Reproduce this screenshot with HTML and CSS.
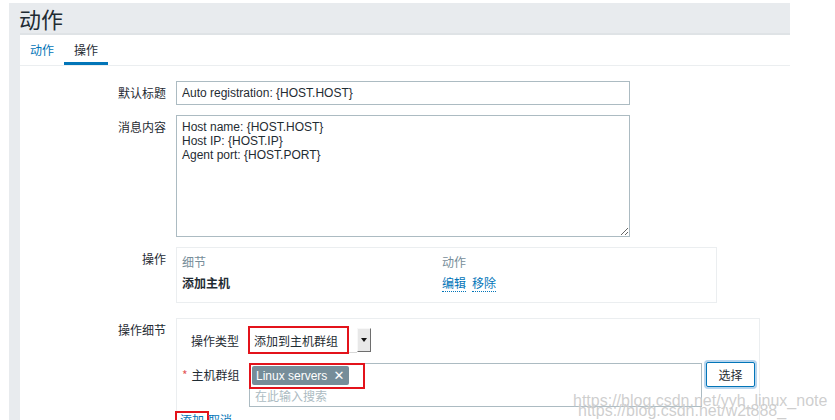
FILE: index.html
```html
<!DOCTYPE html>
<html lang="zh">
<head>
<meta charset="utf-8">
<title>动作</title>
<link rel="stylesheet" href="styles.css">
</head>
<body>
<div class="page">
  <header class="page-head"><h1 class="title">动作</h1></header>
  <div class="panel">
    <ul class="tabs">
      <li class="tab">动作</li>
      <li class="tab active">操作</li>
    </ul>
    <div class="form">
      <div class="lbl">默认标题</div>
      <div class="field"><input class="input" type="text" value="Auto registration: {HOST.HOST}"></div>

      <div class="lbl">消息内容</div>
      <div class="field"><textarea class="textarea">Host name: {HOST.HOST}
Host IP: {HOST.IP}
Agent port: {HOST.PORT}</textarea></div>

      <div class="lbl">操作</div>
      <div class="field">
        <div class="ops">
          <div class="ops-head">细节</div>
          <div class="ops-head">动作</div>
          <div class="ops-name">添加主机</div>
          <div class="ops-actions"><span class="link">编辑</span><span class="link">移除</span></div>
        </div>
      </div>

      <div class="lbl lbl-detail">操作细节</div>
      <div class="field field-detail">
        <div class="detail">
          <div class="detail-grid">
            <div class="dlbl">操作类型</div>
            <div class="dfield">
              <div class="select">
                <span class="select-text">添加到主机群组</span>
                <span class="select-btn"><span class="arrow"></span></span>
                <span class="mark mark-select"></span>
              </div>
            </div>

            <div class="dlbl dlbl-ms"><span class="req">*</span>主机群组</div>
            <div class="dfield ms-row">
              <div class="multiselect">
                <div class="tags">
                  <span class="tag">Linux servers <span class="tag-x">✕</span></span>
                </div>
                <div class="placeholder">在此输入搜索</div>
                <span class="mark mark-tag"></span>
              </div>
              <button class="btn-choose" type="button">选择</button>
            </div>
          </div>
          <div class="detail-links">
            <span class="blink add">添加<span class="mark mark-add"></span></span>
            <span class="blink">取消</span>
          </div>
        </div>
      </div>
    </div>
  </div>
</div>
<div class="watermark">
  <div class="wm wm1">https://blog.csdn.net/yyh_linux_note</div>
  <div class="wm wm2">https://blog.csdn.net/w2t888_</div>
</div>
</body>
</html>
```

FILE: styles.css
```css
html, body {
  margin: 0;
  padding: 0;
  background: #ffffff;
  height: 420px;
  overflow: hidden;
}
body {
  position: relative;
  font-family: "Liberation Sans", Arial, "Noto Sans CJK SC", sans-serif;
  font-size: 12px;
  line-height: 14px;
  color: #1f2c33;
}
.page {
  margin: 3px 0 0 9px;
  width: 781px;
  background: #e8ebee;
  padding-left: 11px;
  box-sizing: border-box;
  min-height: 420px;
}
.page-head {
  height: 30px;
}
.title {
  margin: 0 0 0 -1px;
  font-size: 22px;
  line-height: 30px;
  font-weight: normal;
  color: #1f2c33;
  font-family: "Noto Sans CJK SC", sans-serif;
}
.panel {
  background: #ffffff;
  border-top: 2px solid #dfe3e6;
  min-height: 400px;
}
.tabs {
  list-style: none;
  margin: 0;
  padding: 0;
  display: flex;
  height: 30px;
  border-bottom: 1px solid #ebeef0;
}
.tab {
  padding: 0 10px;
  line-height: 30px;
  font-family: "Noto Sans CJK SC", sans-serif;
  font-size: 12px;
  color: #0275b8;
  box-sizing: border-box;
  height: 30px;
}
.tab.active {
  color: #1f2c33;
  border-bottom: 3px solid #0275b8;
}
.form {
  display: grid;
  grid-template-columns: 146px 1fr;
  column-gap: 10px;
  row-gap: 10px;
  padding-top: 15px;
}
.lbl {
  text-align: right;
  padding-top: 5px;
  font-family: "Noto Sans CJK SC", sans-serif;
  color: #1f2c33;
  line-height: 14px;
}
.lbl-detail, .field-detail {
  margin-top: 5px;
}
.field {
  display: flex;
  align-items: flex-start;
}
.input {
  width: 454px;
  height: 24px;
  box-sizing: border-box;
  border: 1px solid #acbbc2;
  padding: 0 5px;
  margin: 0;
  font-family: "Liberation Sans", Arial, sans-serif;
  font-size: 12px;
  color: #1f2c33;
  background: #fff;
  outline: none;
}
.textarea {
  width: 454px;
  height: 122px;
  box-sizing: border-box;
  border: 1px solid #acbbc2;
  padding: 4px 5px;
  margin: 0;
  font-family: "Liberation Sans", Arial, sans-serif;
  font-size: 12px;
  line-height: 14px;
  color: #1f2c33;
  background: #fff;
  resize: both;
  outline: none;
  overflow: hidden;
}
.ops {
  width: 541px;
  height: 56px;
  box-sizing: border-box;
  border: 1px solid #ebeef0;
  display: grid;
  grid-template-columns: 260px 1fr;
  grid-auto-rows: 14px;
  align-content: start;
  row-gap: 7px;
  padding: 7px 5px 0 5px;
  font-family: "Noto Sans CJK SC", sans-serif;
}
.ops-head {
  color: #768d99;
  line-height: 14px;
}
.ops-name {
  font-weight: bold;
  color: #1f2c33;
  line-height: 14px;
}
.ops-actions {
  display: flex;
  gap: 6px;
  line-height: 14px;
}
.link {
  color: #0275b8;
  border-bottom: 1px dotted #0275b8;
  line-height: 14px;
  height: 15px;
}
.detail {
  width: 584px;
  box-sizing: border-box;
  border: 1px solid #ebeef0;
  border-bottom: none;
  padding: 9px 5px 0 5px;
  min-height: 110px;
}
.detail-grid {
  display: grid;
  grid-template-columns: 57px 1fr;
  column-gap: 10px;
  row-gap: 10px;
}
.dlbl {
  text-align: right;
  padding-top: 6px;
  font-family: "Noto Sans CJK SC", sans-serif;
  line-height: 14px;
  white-space: nowrap;
}
.dlbl-ms {
  padding-top: 5px;
}
.req {
  color: #e45959;
  margin-right: 4px;
}
.dfield {
  display: flex;
  align-items: flex-start;
}
.select {
  position: relative;
  display: flex;
  width: 122px;
  height: 25px;
  box-sizing: border-box;
  background: #fff;
}
.select-text {
  flex: 1;
  padding-left: 5px;
  line-height: 25px;
  font-family: "Noto Sans CJK SC", sans-serif;
  color: #1f2c33;
  border-bottom: 1px solid #d8d8d8;
  box-sizing: border-box;
}
.select-btn {
  width: 14px;
  height: 24px;
  box-sizing: border-box;
  background: #e8e8e8;
  border-top: 1px solid #f8f8f8;
  border-left: 1px solid #f8f8f8;
  border-right: 1px solid #6e6e6e;
  border-bottom: 1px solid #6e6e6e;
  display: flex;
  align-items: center;
  justify-content: center;
}
.arrow {
  width: 0;
  height: 0;
  border-left: 3px solid transparent;
  border-right: 3px solid transparent;
  border-top: 4px solid #111;
}
.mark {
  position: absolute;
  border: 2px solid #e3131b;
  box-sizing: border-box;
  pointer-events: none;
}
.mark-select {
  left: -1px;
  top: -2px;
  width: 101px;
  height: 28px;
}
.ms-row {
  gap: 4px;
}
.multiselect {
  position: relative;
  width: 453px;
  height: 44px;
  box-sizing: border-box;
  border: 1px solid #acbbc2;
  padding: 2px 2px 0 2px;
}
.tags {
  display: flex;
  height: 19px;
}
.tag {
  display: inline-flex;
  align-items: center;
  height: 19px;
  padding: 0 5px 0 4px;
  background: #768d99;
  color: #fff;
  border-radius: 2px;
  font-family: "Liberation Sans", Arial, sans-serif;
  font-size: 12px;
  width: 97px;
  box-sizing: border-box;
  white-space: nowrap;
}
.tag-x {
  font-weight: bold;
  font-size: 13px;
  margin-left: 6px;
  font-family: "DejaVu Sans", sans-serif;
}
.placeholder {
  padding: 4px 0 0 3px;
  color: #acbbc2;
  font-family: "Noto Sans CJK SC", sans-serif;
  line-height: 14px;
}
.mark-tag {
  left: -1px;
  top: -1px;
  width: 116px;
  height: 26px;
}
.btn-choose {
  width: 49px;
  height: 25px;
  margin: -1px 0 0 0;
  box-sizing: border-box;
  border: 1px solid #0275b8;
  border-radius: 2px;
  background: #fff;
  color: #1f2c33;
  font-family: "Noto Sans CJK SC", sans-serif;
  font-size: 12px;
  padding: 0;
  box-shadow: 0 0 0 2px #b7d5ee;
}
.detail-links {
  margin: 6px 0 0 -2px;
  display: flex;
  gap: 4px;
  font-family: "Noto Sans CJK SC", sans-serif;
}
.blink {
  color: #0275b8;
  position: relative;
}
.mark-add {
  left: -5px;
  top: -2px;
  width: 34px;
  height: 20px;
}
.watermark {
  position: absolute;
  left: 573px;
  top: 393px;
  font-family: "Liberation Sans", Arial, sans-serif;
  font-size: 16px;
  line-height: 16px;
  color: rgba(190, 190, 190, 0.75);
  pointer-events: none;
}
.wm {
  white-space: nowrap;
  text-shadow: 0 0 1px rgba(255,255,255,0.8);
}
.wm2 {
  margin: -6px 0 0 5px;
}
```
